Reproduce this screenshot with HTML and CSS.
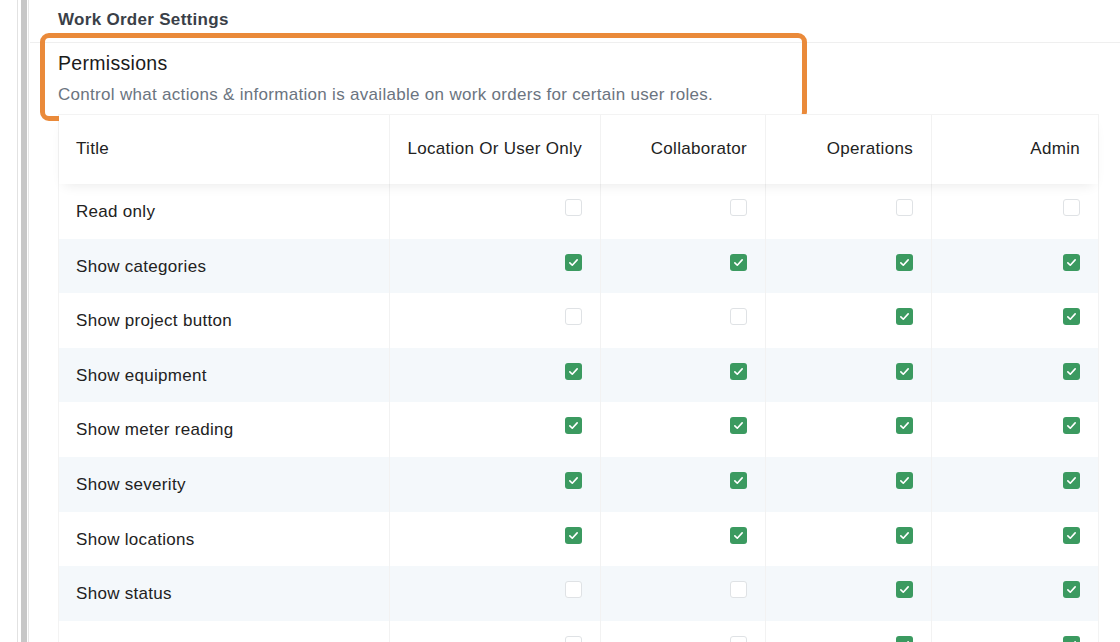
FILE: index.html
```html
<!DOCTYPE html>
<html lang="en">
<head>
    <meta charset="UTF-8">
    <meta name="viewport" content="width=device-width, initial-scale=1.0">
    <title>Work Order Settings - Permissions</title>
    <link rel="stylesheet" href="styles.css">
</head>
<body>
    <div class="rail">
        <div class="track"><div class="thumb"></div></div>
    </div>

    <main class="content">
        <h2 class="page-title">Work Order Settings</h2>

        <section class="card">
            <div class="highlight"></div>
            <h3 class="perm-title">Permissions</h3>
            <p class="perm-desc">Control what actions &amp; information is available on work orders for certain user roles.</p>

            <div class="perm-table" id="permTable">
                <div class="row head">
                    <div class="cell title">Title</div>
                    <div class="cell">Location Or User Only</div>
                    <div class="cell">Collaborator</div>
                    <div class="cell">Operations</div>
                    <div class="cell">Admin</div>
                </div>
            </div>
        </section>
    </main>

    <script>
        const perms = [
            ['Read only', [0, 0, 0, 0]],
            ['Show categories', [1, 1, 1, 1]],
            ['Show project button', [0, 0, 1, 1]],
            ['Show equipment', [1, 1, 1, 1]],
            ['Show meter reading', [1, 1, 1, 1]],
            ['Show severity', [1, 1, 1, 1]],
            ['Show locations', [1, 1, 1, 1]],
            ['Show status', [0, 0, 1, 1]],
            ['Show scheduled start date', [0, 0, 1, 1]]
        ];

        const checkSvg = '<svg viewBox="0 0 16 16" width="13" height="13"><path d="M3.5 8.4l3 3 6-6.6" fill="none" stroke="#fff" stroke-width="2" stroke-linecap="round" stroke-linejoin="round"/></svg>';

        const table = document.getElementById('permTable');
        perms.forEach(function (p, i) {
            const row = document.createElement('div');
            row.className = 'row' + (i % 2 === 1 ? ' striped' : '');
            let html = '<div class="cell title">' + p[0] + '</div>';
            p[1].forEach(function (on) {
                html += '<div class="cell"><span class="box' + (on ? ' checked' : '') + '">' + (on ? checkSvg : '') + '</span></div>';
            });
            row.innerHTML = html;
            table.appendChild(row);
        });
    </script>
</body>
</html>
```

FILE: styles.css
```css
body {
    margin: 0;
    font-family: "Liberation Sans", Arial, sans-serif;
    letter-spacing: 0.3px;
    color: #222;
    background: #fff;
    display: flex;
    height: 642px;
    overflow: hidden;
}
.rail {
    width: 30px;
    flex-shrink: 0;
    display: flex;
}
.track {
    margin-left: 17px;
    border-left: 1px solid #e2e2e2;
    border-right: 1px solid #e6e6e6;
    padding: 0 1px 0 3px;
    display: flex;
}
.thumb {
    width: 6px;
    background: #c7c7c7;
}
.content {
    flex: 1;
}
.page-title {
    margin: 0;
    padding: 8px 0 10px 28px;
    font-size: 17px;
    line-height: 24px;
    font-weight: bold;
    color: #3a3f48;
}
.card {
    position: relative;
    border-top: 1px solid #efefef;
    padding: 8px 0 0 28px;
}
.highlight {
    position: absolute;
    left: 10px;
    top: -10px;
    width: 757px;
    height: 78px;
    border: 5px solid #ea8a3a;
    border-radius: 9px;
}
.perm-title {
    margin: 0;
    font-size: 19.5px;
    line-height: 24px;
    font-weight: 500;
    color: #1b1b1b;
}
.perm-desc {
    margin: 8px 0 7px;
    font-size: 17px;
    line-height: 24px;
    color: #6b7480;
}
.perm-table {
    width: 1039px;
    border-left: 1px solid #f3f3f3;
    border-right: 1px solid #f3f3f3;
}
.row {
    display: grid;
    grid-template-columns: 331px 211px 165px 166px 166px;
    height: 54.6px;
    font-size: 17px;
}
.row.striped {
    background: #f4f8fb;
}
.row.head {
    height: 69px;
    border-top: 1px solid #f3f3f3;
    box-shadow: 0 6px 12px -5px rgba(0, 0, 0, 0.09);
    position: relative;
    z-index: 1;
    background: #fff;
}
.cell {
    border-right: 1px solid #f2f2f2;
    padding: 15px 18px 0 0;
    text-align: right;
    line-height: 26px;
}
.cell:last-child {
    border-right: none;
}
.cell.title {
    text-align: left;
    padding-left: 17px;
}
.head .cell {
    padding-top: 0;
    line-height: 68px;
}
.box {
    display: inline-block;
    box-sizing: border-box;
    width: 17px;
    height: 17px;
    border: 1.5px solid #dfe2e5;
    border-radius: 3px;
    background: #fff;
    vertical-align: top;
}
.box.checked {
    border: none;
    background: #3b9a60;
    display: inline-flex;
    align-items: center;
    justify-content: center;
}
```
